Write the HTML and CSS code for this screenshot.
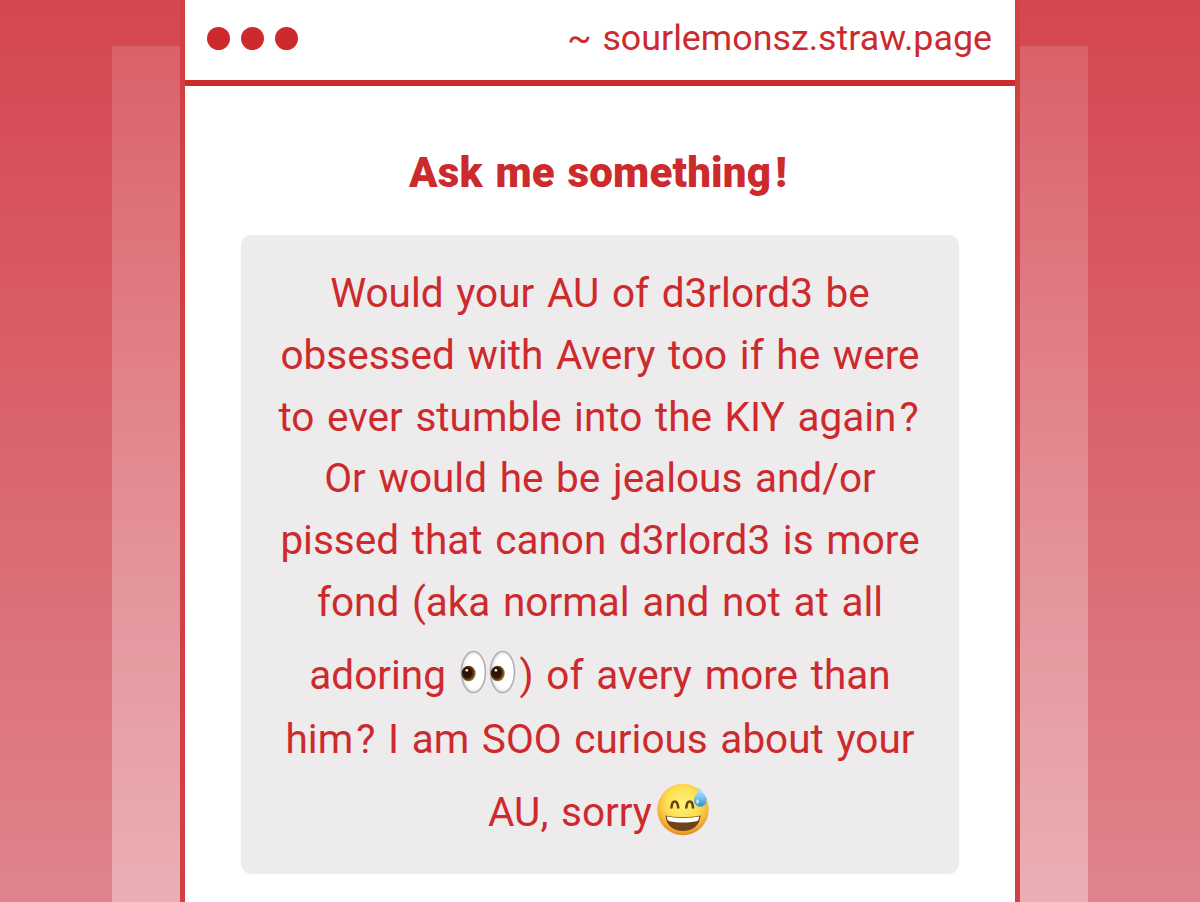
FILE: index.html
```html
<!DOCTYPE html>
<html lang="en">

    <head>
        <meta charset="UTF-8">
        <meta name="viewport" content="width=device-width, initial-scale=1.0">
        <title>Ask me something!</title>
        <link rel="stylesheet" href="styles.css">
    </head>

    <body>
        <div class="side"></div>

        <main class="window">
            <header class="bar">
                <div class="dots">
                    <span class="dot"></span>
                    <span class="dot"></span>
                    <span class="dot"></span>
                </div>
                <div class="site">~ sourlemonsz.straw.page</div>
            </header>

            <h1 class="title">Ask me something<span class="mark">!</span></h1>

            <div class="question">
                <div class="line">Would your AU of d3rlord3 be</div>
                <div class="line">obsessed with Avery too if he were</div>
                <div class="line wide">to ever stumble into the KIY again<span class="ask">?</span></div>
                <div class="line">Or would he be jealous and/or</div>
                <div class="line">pissed that canon d3rlord3 is more</div>
                <div class="line">fond (aka normal and not at all</div>
                <div class="line tall">adoring <svg class="eyes" viewBox="0 0 58 46" role="img" aria-label="eyes">
                        <defs>
                            <radialGradient id="white" cx="55%" cy="50%" r="52%">
                                <stop offset="0.75" stop-color="#ffffff"/>
                                <stop offset="1" stop-color="#e0e0e2"/>
                            </radialGradient>
                            <radialGradient id="iris" cx="42%" cy="45%" r="58%">
                                <stop offset="0.5" stop-color="#2a1206"/>
                                <stop offset="0.78" stop-color="#6a4716"/>
                                <stop offset="1" stop-color="#a88b3c"/>
                            </radialGradient>
                        </defs>
                        <ellipse cx="14.4" cy="23" rx="12" ry="20.6" fill="url(#white)" stroke="#adaeb2" stroke-width="1.5"/>
                        <ellipse cx="43.5" cy="23" rx="12" ry="20.6" fill="url(#white)" stroke="#adaeb2" stroke-width="1.5"/>
                        <ellipse cx="9.6" cy="24.5" rx="7.1" ry="7.8" fill="url(#iris)"/>
                        <ellipse cx="38.7" cy="24.5" rx="7.1" ry="7.8" fill="url(#iris)"/>
                        <circle cx="7.8" cy="21.3" r="1.4" fill="#f3ece4"/>
                        <circle cx="36.9" cy="21.3" r="1.4" fill="#f3ece4"/>
                    </svg>) of avery more than</div>
                <div class="line">him<span class="ask">?</span> I am SOO curious about your</div>
                <div class="line tall">AU, sorry<svg class="sweat" viewBox="0 0 54 54" role="img" aria-label="grinning face with sweat">
                        <defs>
                            <radialGradient id="face" cx="50%" cy="38%" r="64%">
                                <stop offset="0" stop-color="#fff27a"/>
                                <stop offset="0.5" stop-color="#fde052"/>
                                <stop offset="0.8" stop-color="#f5b238"/>
                                <stop offset="1" stop-color="#dc851f"/>
                            </radialGradient>
                            <linearGradient id="drop" x1="0" y1="0" x2="0" y2="1">
                                <stop offset="0" stop-color="#c4ebfa"/>
                                <stop offset="0.5" stop-color="#7fc8ee"/>
                                <stop offset="1" stop-color="#2f8fd8"/>
                            </linearGradient>
                        </defs>
                        <circle cx="27" cy="27.5" r="25.7" fill="url(#face)"/>
                        <path d="M15.5 25.5C16 17.500 21.500 17.500 22.200 25.5M30.300 25.5C31 17.500 36.500 17.500 37 25.5" fill="none" stroke="#6b4312" stroke-width="2.600" stroke-linecap="round"/>
                        <path d="M9.500 33.500C18 35.500 36 35.500 44.500 33.500C44 43.500 36.500 49 27 49C17.500 49 10 43.500 9.500 33.500Z" fill="#70421b"/>
                        <path d="M10.800 34.400C20 36.200 34 36.200 43.200 34.400C43 37.500 42 38.700 40.500 39.300C32 41 22 41 13.500 39.300C12 38.700 11 37.500 10.800 34.400Z" fill="#fff"/>
                        <path d="M43.500 5C45.800 10 50.700 14 50.700 18.300A6.400 6.400 0 0 1 37.900 18.300C37.900 14 42.600 10 43.500 5Z" fill="url(#drop)"/>
                        <ellipse cx="41.500" cy="19.500" rx="1.300" ry="2.300" fill="#c9ebfa"/>
                    </svg></div>
            </div>
        </main>

        <div class="side"></div>
    </body>

</html>
```

FILE: styles.css
```css
body {
    margin: 0;
    height: 902px;
    overflow: hidden;
    display: flex;
    justify-content: center;
    font-family: Roboto, "Liberation Sans", sans-serif;
    color: #cd2a2e;
    background: linear-gradient(#d54650, #df848d);
}

.side {
    width: 68px;
    margin-top: 46px;
    background: linear-gradient(rgba(255, 255, 255, 0.13), rgba(255, 255, 255, 0.35));
}

.window {
    box-sizing: border-box;
    width: 840px;
    height: 902px;
    background: #fff;
    border-left: 5px solid #d14143;
    border-right: 5px solid #d14143;
}

.bar {
    box-sizing: border-box;
    height: 86px;
    padding: 0 22px;
    border-bottom: 6px solid #cd2a2e;
    display: flex;
    justify-content: space-between;
    align-items: center;
}

.dots {
    display: flex;
    gap: 11px;
    margin-top: -4px;
}

.dot {
    width: 23px;
    height: 23px;
    border-radius: 50%;
    background: #cd2a2e;
}

.site {
    margin-top: -5px;
    margin-right: 1px;
    font-size: 35.8px;
    word-spacing: 2px;
}

.title {
    margin: 62px 0 0;
    padding-right: 4px;
    height: 87px;
    line-height: 50px;
    font-size: 42px;
    font-weight: 900;
    letter-spacing: 0.2px;
    word-spacing: 2px;
    text-align: center;
}

.mark {
    margin-left: 4px;
}

.question {
    box-sizing: border-box;
    width: 718px;
    height: 639px;
    margin: 0 auto;
    padding-top: 28.3px;
    background: #edebec;
    border-radius: 10px;
    font-size: 40.5px;
    line-height: 61.7px;
    word-spacing: 2.6px;
    text-align: center;
    white-space: nowrap;
}

.wide {
    padding-right: 3px;
}

.ask {
    margin-left: 3px;
}

.tall {
    padding: 11.5px 0 2px;
}

.eyes,
.sweat {
    vertical-align: top;
}

.eyes {
    width: 58px;
    height: 46px;
    margin: 4px 3px 0 0;
}

.sweat {
    width: 54px;
    height: 54px;
    margin: 0 2px 0 4px;
}
```
